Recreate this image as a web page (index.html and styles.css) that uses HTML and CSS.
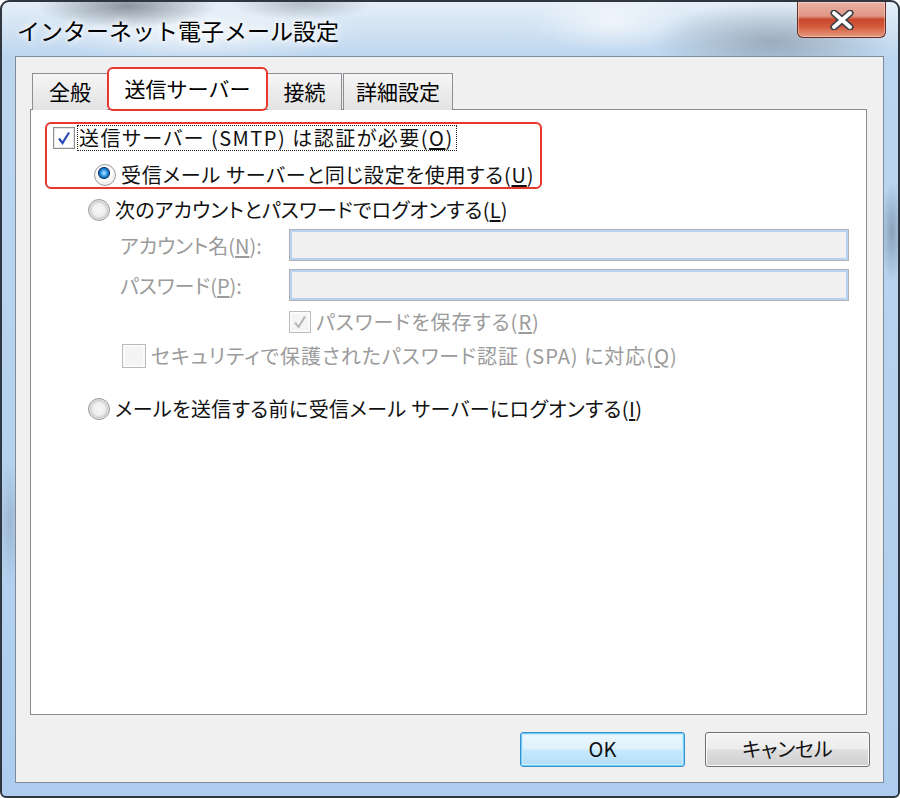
FILE: index.html
```html
<!DOCTYPE html>
<html lang="ja">
<head>
<meta charset="utf-8">
<title>インターネット電子メール設定</title>
<link rel="stylesheet" href="styles.css">
</head>
<body>
<div class="window">
  <div class="titlebar">
    <div class="title">インターネット電子メール設定</div>
    <div class="close">
      <svg width="24" height="20" viewBox="0 0 24 20">
        <path d="M4 3 L20 17 M20 3 L4 17" stroke="#3a3f48" stroke-width="7" stroke-linecap="round" fill="none"/>
        <path d="M4 3 L20 17 M20 3 L4 17" stroke="#ffffff" stroke-width="4" stroke-linecap="round" fill="none"/>
      </svg>
    </div>
  </div>
  <div class="client">
    <div class="tabs">
      <div class="tab t1">全般</div>
      <div class="tab active">送信サーバー</div>
      <div class="tab t3">接続</div>
      <div class="tab t4">詳細設定</div>
    </div>
    <div class="panel">
      <div class="highlight">
        <div class="row r1">
          <span class="cb checked">
            <svg width="16" height="16" viewBox="0 0 16 16"><path d="M3 8.5 L6.5 13 L13 2.5" stroke="#2b49b8" stroke-width="2.2" fill="none"/></svg>
          </span>
          <span class="focus">送信サーバー (SMTP) は認証が必要(<u>O</u>)</span>
        </div>
        <div class="row r2">
          <span class="radio on"></span>
          <span class="lbl">受信メール サーバーと同じ設定を使用する(<u>U</u>)</span>
        </div>
      </div>
      <div class="row r3">
        <span class="radio"></span>
        <span class="lbl">次のアカウントとパスワードでログオンする(<u>L</u>)</span>
      </div>
      <div class="field f1">
        <span class="flabel">アカウント名(<u>N</u>):</span>
        <span class="input"></span>
      </div>
      <div class="field f2">
        <span class="flabel">パスワード(<u>P</u>):</span>
        <span class="input"></span>
      </div>
      <div class="row r4">
        <span class="cb checked disabled">
          <svg width="16" height="16" viewBox="0 0 16 16"><path d="M3 8.5 L6.5 13 L13 2.5" stroke="#b4b4b4" stroke-width="2" fill="none"/></svg>
        </span>
        <span class="lbl dim">パスワードを保存する(<u>R</u>)</span>
      </div>
      <div class="row r5">
        <span class="cb disabled"></span>
        <span class="lbl dim">セキュリティで保護されたパスワード認証 (SPA) に対応(<u>Q</u>)</span>
      </div>
      <div class="row r6">
        <span class="radio"></span>
        <span class="lbl">メールを送信する前に受信メール サーバーにログオンする(<u>I</u>)</span>
      </div>
    </div>
    <div class="buttons">
      <div class="btn ok">OK</div>
      <div class="btn">キャンセル</div>
    </div>
  </div>
</div>
</body>
</html>
```

FILE: styles.css
```css
html, body {
  margin: 0;
  padding: 0;
  background: #ffffff;
}
body {
  width: 900px;
  height: 798px;
  overflow: hidden;
  font-family: "Noto Sans CJK JP", "Noto Sans", sans-serif;
  color: #111;
}
.window {
  box-sizing: border-box;
  width: 900px;
  height: 798px;
  border: 2px solid #2f3640;
  border-radius: 9px 9px 6px 6px;
  display: flex;
  flex-direction: column;
  background:
    radial-gradient(ellipse 90px 22px at 125px 4px, rgba(70,78,88,0.55), rgba(70,78,88,0) 100%),
    radial-gradient(ellipse 70px 16px at 300px 2px, rgba(90,100,110,0.35), rgba(90,100,110,0) 100%),
    radial-gradient(ellipse 120px 40px at 770px 40px, rgba(100,112,124,0.45), rgba(100,112,124,0) 100%),
    radial-gradient(ellipse 80px 30px at 610px 20px, rgba(255,255,255,0.6), rgba(255,255,255,0) 100%),
    radial-gradient(ellipse 160px 30px at 200px 30px, rgba(255,255,255,0.7), rgba(255,255,255,0) 100%),
    radial-gradient(ellipse 12px 60px at 8px 520px, rgba(120,140,160,0.35), rgba(120,140,160,0) 100%),
    radial-gradient(ellipse 12px 50px at 890px 230px, rgba(80,100,120,0.45), rgba(80,100,120,0) 100%),
    linear-gradient(to bottom, #e6eff8 0px, #cfe1f3 30px, #bcd6ef 56px, #aecdee 100%);
}
.titlebar {
  height: 54px;
  display: flex;
  justify-content: space-between;
  flex-shrink: 0;
}
.title {
  align-self: center;
  padding-left: 15px;
  padding-top: 2px;
  font-size: 23px;
  line-height: 30px;
  color: #000;
  text-shadow: 0 0 6px #ffffff, 0 0 10px #ffffff;
}
.close {
  width: 89px;
  height: 36px;
  box-sizing: border-box;
  margin-right: 12px;
  border: 1px solid #6b2c22;
  border-top: none;
  border-radius: 0 0 6px 6px;
  background: linear-gradient(to bottom, #eab1a2 0%, #e09584 40%, #c9482d 50%, #d45a3b 70%, #e49a80 100%);
  box-shadow: inset 0 0 0 1px rgba(255,255,255,0.35);
  display: flex;
  align-items: center;
  justify-content: center;
}
.client {
  box-sizing: border-box;
  width: 869px;
  height: 727px;
  margin-left: 13px;
  border: 1px solid #7d8b9b;
  background: #f0f0f0;
  padding: 11px 16px 0 14px;
  display: flex;
  flex-direction: column;
}
.tabs {
  display: flex;
  align-items: flex-end;
  height: 42px;
  padding-left: 2px;
  position: relative;
  z-index: 1;
  margin-bottom: -1px;
}
.tab {
  box-sizing: border-box;
  height: 37px;
  border: 1px solid #8c8e94;
  border-bottom: none;
  background: linear-gradient(to bottom, #f6f6f6 0%, #ececec 50%, #e2e2e2 100%);
  font-size: 21px;
  line-height: 34px;
  text-align: center;
  color: #000;
}
.t1 { width: 75px; border-right: none; }
.t3 { width: 74px; border-left: none; }
.t4 { width: 110px; margin-left: 1px; }
.tab.active {
  width: 161px;
  height: 44px;
  background: #ffffff;
  border: 2px solid #e8372c;
  border-radius: 6px;
  line-height: 38px;
  margin-bottom: -1px;
  position: relative;
  z-index: 2;
}
.panel {
  box-sizing: border-box;
  width: 837px;
  height: 606px;
  border: 1px solid #898c95;
  background: #ffffff;
  display: flex;
  flex-direction: column;
  align-items: flex-start;
}
.highlight {
  box-sizing: border-box;
  width: 497px;
  height: 67px;
  margin: 12px 0 0 14px;
  border: 2px solid #e8372c;
  border-radius: 6px;
  padding: 1px 0 0 6px;
}
.row {
  display: flex;
  align-items: center;
  font-size: 20px;
  line-height: 24px;
  height: 24px;
  white-space: nowrap;
  color: #111;
  font-feature-settings: "palt";
}
.row.r1 { height: 26px; }
.row.r2 { margin: 12px 0 0 41px; }
.row.r3 { margin: 9px 0 0 57px; }
.row.r4 { margin: 9px 0 0 258px; }
.row.r5 { margin: 10px 0 0 91px; }
.row.r6 { margin: 29px 0 0 57px; }
.focus {
  margin-left: 2px;
  border: 1px dotted #222;
  padding: 0 2px 0 1px;
  line-height: 24px;
  letter-spacing: 1.5px;
}
.r2 .lbl { letter-spacing: 0.8px; }
.r3 .lbl { letter-spacing: 0.2px; }
.r4 .lbl { letter-spacing: 1px; }
.r5 .lbl { letter-spacing: 1px; }
.r6 .lbl { letter-spacing: 0.4px; }
.lbl { margin-left: 5px; }
.dim { color: #9b9b9b; }
u { text-underline-offset: 2px; }
.cb {
  box-sizing: border-box;
  width: 22px;
  height: 22px;
  border: 1px solid #8e8f8f;
  background: linear-gradient(135deg, #dcdcdc 0%, #f6f6f6 60%, #ffffff 100%);
  box-shadow: inset 0 0 0 2px #f4f4f4;
  display: flex;
  align-items: center;
  justify-content: center;
  flex-shrink: 0;
}
.cb.checked { background: #ffffff; box-shadow: inset 0 0 0 1px #e6e6e6; }
.cb.disabled {
  border-color: #bcbcbc;
  background: #f4f4f4;
  box-shadow: inset 0 0 0 2px #fafafa;
}
.r5 .cb { width: 24px; height: 24px; }
.radio {
  box-sizing: border-box;
  width: 22px;
  height: 22px;
  border-radius: 50%;
  border: 1px solid #9a9a9a;
  background: radial-gradient(circle at 50% 50%, #f8f8f8 0%, #eeeeee 45%, #d0d0d0 60%, #f2f2f2 75%, #ffffff 100%);
  flex-shrink: 0;
}
.radio.on {
  background:
    radial-gradient(circle at 45% 40%, #bfe6ff 0%, #3aa2e8 18%, #0f5fb4 30%, #193a6a 34%, #ffffff 40%, #f0f0f0 70%, #d6d6d6 100%);
}
.field {
  display: flex;
  align-items: center;
  height: 32px;
  font-size: 20px;
  color: #9b9b9b;
  margin-left: 89px;
  white-space: nowrap;
  font-feature-settings: "palt";
}
.f1 { margin-top: 7px; }
.f2 { margin-top: 8px; }
.flabel { width: 169px; }
.input {
  box-sizing: border-box;
  width: 560px;
  height: 32px;
  border: 1px solid #b3b3b3;
  background: #f0f0f0;
  box-shadow: inset 0 0 0 2px #b7d3f1;
}
.buttons {
  display: flex;
  justify-content: flex-end;
  gap: 20px;
  margin-top: 17px;
  margin-right: -3px;
}
.btn {
  box-sizing: border-box;
  width: 165px;
  height: 35px;
  border: 1px solid #707070;
  border-radius: 3px;
  background: linear-gradient(to bottom, #f4f4f4 0%, #ececec 48%, #dddddd 52%, #d0d0d0 100%);
  box-shadow: inset 0 0 0 1px #fcfcfc;
  font-size: 20px;
  line-height: 32px;
  text-align: center;
  color: #111;
  font-feature-settings: "palt";
}
.btn.ok {
  border-color: #3c8fcf;
  background: linear-gradient(to bottom, #eef8fe 0%, #ddf1fc 48%, #c6e9fc 52%, #b3def6 100%);
  box-shadow: inset 0 0 0 1px #6fd0f7, inset 0 0 0 2px #c8ecfb;
}
```
